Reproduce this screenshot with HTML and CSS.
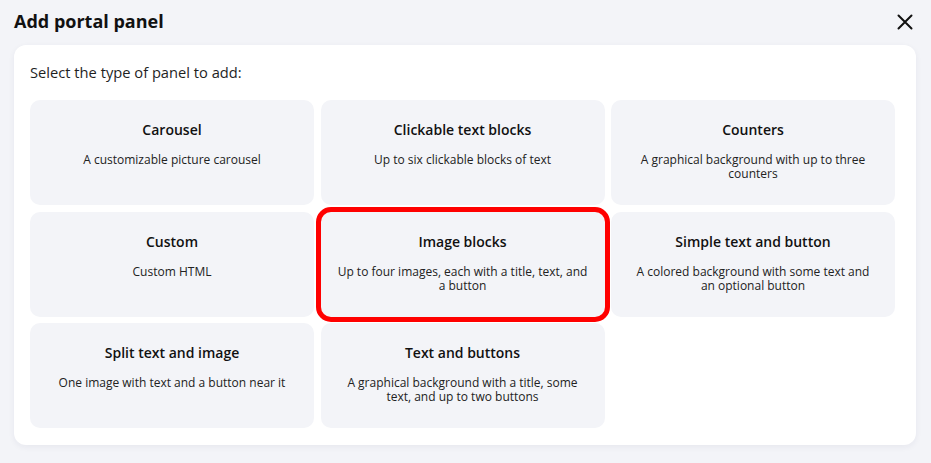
FILE: index.html
```html
<!DOCTYPE html>
<html lang="en">
<head>
<meta charset="utf-8">
<title>Add portal panel</title>
<link rel="stylesheet" href="styles.css">
</head>
<body>
<div class="dialog">
  <header class="dialog-header">
    <h1 class="dialog-title">Add portal panel</h1>
    <button class="close-btn" aria-label="Close">
      <svg width="16" height="16" viewBox="0 0 16 16"><path d="M1.5 1.5 L14.5 14.5 M14.5 1.5 L1.5 14.5" stroke="#111" stroke-width="2" stroke-linecap="round" fill="none"/></svg>
    </button>
  </header>
  <section class="panel">
    <p class="intro">Select the type of panel to add:</p>
    <div class="grid">
      <div class="card"><h2 class="card-title">Carousel</h2><p class="card-desc">A customizable picture carousel</p></div>
      <div class="card"><h2 class="card-title">Clickable text blocks</h2><p class="card-desc">Up to six clickable blocks of text</p></div>
      <div class="card"><h2 class="card-title">Counters</h2><p class="card-desc">A graphical background with up to three counters</p></div>
      <div class="card"><h2 class="card-title">Custom</h2><p class="card-desc">Custom HTML</p></div>
      <div class="card selected"><h2 class="card-title">Image blocks</h2><p class="card-desc">Up to four images, each with a title, text, and a button</p></div>
      <div class="card"><h2 class="card-title">Simple text and button</h2><p class="card-desc">A colored background with some text and an&nbsp;optional button</p></div>
      <div class="card"><h2 class="card-title">Split text and image</h2><p class="card-desc">One image with text and a button near it</p></div>
      <div class="card"><h2 class="card-title">Text and buttons</h2><p class="card-desc">A graphical background with a title, some text, and up to two buttons</p></div>
    </div>
  </section>
</div>
</body>
</html>
```
FILE: styles.css
```css
html, body {
  margin: 0;
  padding: 0;
  background: #f3f4f8;
  font-family: "Open Sans", "Liberation Sans", sans-serif;
  color: #1a1a1a;
}
.dialog {
  width: 931px;
  height: 463px;
  box-sizing: border-box;
  padding: 0 15px 0 14px;
}
.dialog-header {
  display: flex;
  align-items: center;
  justify-content: space-between;
  height: 45px;
  box-sizing: border-box;
  padding-bottom: 3px;
}
.dialog-title {
  margin: 0;
  font-size: 18px;
  font-weight: 700;
  color: #111;
}
.close-btn {
  border: 0;
  background: none;
  padding: 0;
  margin-right: 3px;
  margin-top: 2px;
  width: 16px;
  height: 16px;
  display: flex;
}
.panel {
  background: #fff;
  border-radius: 12px;
  box-shadow: 0 2px 6px rgba(30, 40, 80, 0.06);
  padding: 16px 21px 17px 16px;
}
.intro {
  margin: 0 0 17px 0;
  font-size: 14.7px;
  line-height: 22px;
  color: #1f1f1f;
}
.grid {
  display: grid;
  grid-template-columns: repeat(3, 1fr);
  gap: 6.5px;
}
.card {
  background: #f3f4f8;
  border-radius: 10px;
  height: 105px;
  box-sizing: border-box;
  padding: 20px 16px 0;
  text-align: center;
}
.card.selected {
  outline: 5px solid #ff0000;
  outline-offset: 0;
}
.card-title {
  margin: 0 0 13px 0;
  font-size: 14px;
  line-height: 20px;
  font-weight: 600;
  color: #111;
}
.card-desc {
  margin: 0;
  font-size: 12px;
  line-height: 14px;
  color: #222;
}
```
